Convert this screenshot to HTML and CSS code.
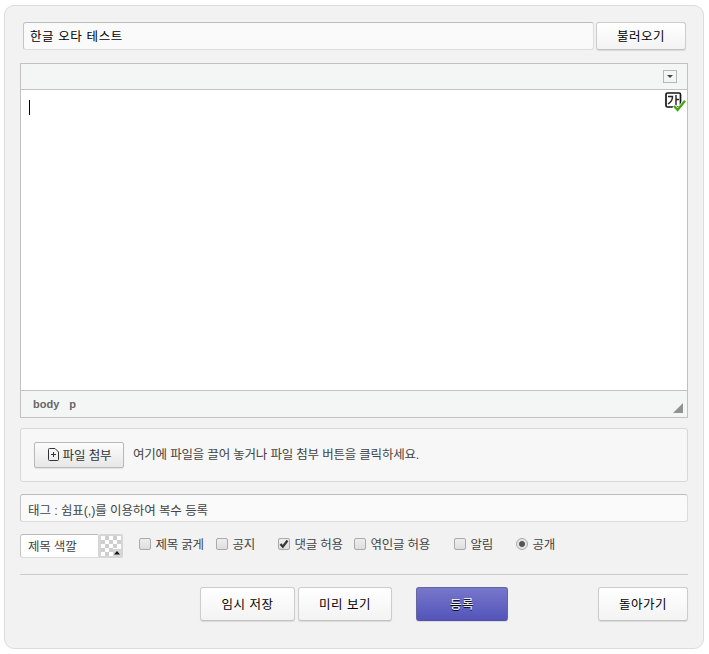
FILE: index.html
```html
<!DOCTYPE html>
<html lang="ko">
<head>
<meta charset="utf-8">
<title>글쓰기</title>
<link rel="stylesheet" href="styles.css">
</head>
<body>
<main class="panel">
  <div class="title-row">
    <div class="title-input">한글 오타 테스트</div>
    <button class="btn load">불러오기</button>
  </div>
  <section class="editor">
    <div class="toolbar">
      <span class="collapse"><svg width="6" height="3" viewBox="0 0 6 3"><path d="M0 0h6L3 3z" fill="#444"/></svg></span>
    </div>
    <div class="content">
      <span class="caret"></span>
      <svg class="speller" width="21" height="21" viewBox="0 0 21 21" fill="none">
        <rect x="1" y="1" width="14.5" height="14" rx="1.5" fill="#fff" stroke="#161616" stroke-width="1.7"/>
        <path d="M3 4.500h4.500c0 3-1.200 5.600-4.500 7.500M11 3v10.500M11 7.500h3" stroke="#222" stroke-width="1.400"/>
        <path d="M9 14l3.700 4.800L19.800 9" stroke="#fff" stroke-width="4"/>
        <path d="M9 14l3.600 4L20 8.800" stroke="#42a60b" stroke-width="2.300"/>
      </svg>
    </div>
    <div class="status"><b>body</b><b>p</b>
      <svg class="grip" width="10" height="10" viewBox="0 0 10 10"><path d="M10 0v10H0z" fill="#929292"/></svg>
    </div>
  </section>
  <section class="upload">
    <button class="attach"><svg width="11" height="13" viewBox="0 0 11 13" fill="none" stroke="#333" stroke-width="1"><path d="M1.500.5h5.500l3.500 3.500v7.500q0 1-1 1h-8q-1 0-1-1v-10q0-1 1-1zM3 6.500h5M5.500 4v5"/></svg><span>파일 첨부</span></button>
    <span class="hint">여기에 파일을 끌어 놓거나 파일 첨부 버튼을 클릭하세요.</span>
  </section>
  <div class="tags">태그 : 쉼표(,)를 이용하여 복수 등록</div>
  <div class="options">
    <div class="color"><span class="color-name">제목 색깔</span><span class="swatch"><svg width="20" height="20" viewBox="0 0 20 20"><path d="M4 0h4v4H4zM12 0h4v4h-4zM0 4h4v4H0zM8 4h4v4H8zM16 4h4v4h-4zM4 8h4v4H4zM12 8h4v4h-4zM0 12h4v4H0zM8 12h4v4H8zM4 16h4v4H4z" fill="#cecece"/><path d="M12 13h8v7h-8z" fill="#d6d6d6"/><path d="M13 18.500h6L16 15z" fill="#111"/></svg></span></div>
    <label class="opt o1"><i class="box"></i><span>제목 굵게</span></label>
    <label class="opt o2"><i class="box"></i><span>공지</span></label>
    <label class="opt o3"><i class="box"><svg width="10" height="10" viewBox="0 0 10 10"><path d="M1.500 5l2.300 2.700L8.500 1.500" fill="none" stroke="#383838" stroke-width="2.300"/></svg></i><span>댓글 허용</span></label>
    <label class="opt o4"><i class="box"></i><span>엮인글 허용</span></label>
    <label class="opt o5"><i class="box"></i><span>알림</span></label>
    <label class="opt o6"><i class="box radio"></i><span>공개</span></label>
  </div>
  <div class="actions">
    <button class="btn save">임시 저장</button>
    <button class="btn preview">미리 보기</button>
    <button class="btn submit">등록</button>
    <button class="btn back">돌아가기</button>
  </div>
</main>
</body>
</html>
```
FILE: styles.css
```css
* { box-sizing: border-box; }
body {
  margin: 0;
  padding: 5px 0 0 4px;
  background: #fff;
  color: #444;
  font: 12.5px/18px "Liberation Sans", "Noto Sans CJK KR", sans-serif;
}
svg { display: block; }
button { font: inherit; padding: 0; margin: 0; }
.panel {
  width: 700px;
  height: 644px;
  padding: 16px 15px 0;
  border: 1px solid #dcdcdc;
  border-radius: 10px;
  background: #f2f2f2;
}
.title-row { display: flex; gap: 2px; margin-left: 3px; }
.title-input, .tags {
  height: 28px;
  border: 1px solid #dcdcdc;
  border-top-color: #bbb;
  border-left-color: #c4c4c4;
  border-radius: 3px;
  background: #fafafa;
  white-space: nowrap;
}
.title-input { width: 571px; padding: 5px 6px 0; color: #000; letter-spacing: .6px; }
.btn {
  padding-top: 1px;
  border: 1px solid #ccc;
  border-bottom-color: #c2c2c2;
  border-radius: 3px;
  background: linear-gradient(#fff, #f3f3f3);
  box-shadow: 0 1px 1px rgba(0, 0, 0, .1);
  color: #000;
  letter-spacing: .5px;
  white-space: nowrap;
}
.load { width: 90px; height: 28px; }
.editor {
  width: 668px;
  height: 355px;
  margin-top: 13px;
  border: 1px solid #c1c1c1;
  background: #fff;
}
.toolbar {
  display: flex;
  justify-content: flex-end;
  height: 26px;
  padding: 6px 10px 0 0;
  border-bottom: 1px solid #c1c1c1;
  background: #f4f6f6;
}
.collapse {
  display: flex;
  align-items: center;
  justify-content: center;
  width: 14px;
  height: 13px;
  border: 1px solid #b8b8b8;
}
.content {
  display: flex;
  justify-content: space-between;
  height: 300px;
  padding: 2px 1px 0 8px;
}
.caret { width: 1px; height: 15px; margin-top: 8px; background: #000; }
.status {
  display: flex;
  gap: 10px;
  height: 27px;
  padding: 4px 4px 0 12px;
  border-top: 1px solid #c1c1c1;
  background: #f4f6f6;
  color: #666;
  font-size: 11px;
}
.grip { margin: 8px 0 0 auto; }
.upload {
  display: flex;
  width: 668px;
  height: 54px;
  margin-top: 10px;
  padding: 13px 13px 0;
  border: 1px solid #d8d8d8;
  border-radius: 3px;
  background: #f7f7f7;
}
.attach {
  display: flex;
  align-items: center;
  justify-content: center;
  gap: 4px;
  width: 90px;
  height: 26px;
  padding-left: 1px;
  border: 1px solid #b9b9b9;
  border-radius: 2px;
  background: linear-gradient(#fcfcfc, #e7e7e7);
  box-shadow: 0 1px 1px rgba(0, 0, 0, .08);
  color: #333;
}
.attach svg { margin-top: -2px; }
.attach span { padding-top: 1px; letter-spacing: -.1px; }
.hint { margin: 4px 0 0 9px; letter-spacing: -.2px; white-space: nowrap; }
.tags { width: 668px; margin-top: 12px; padding: 7px 7px 0; letter-spacing: -.1px; }
.options { display: flex; height: 24px; margin-top: 12px; }
.color { display: flex; width: 103px; }
.color-name {
  width: 78px;
  height: 24px;
  padding: 3px 0 0 7px;
  border: 1px solid #dcdcdc;
  border-top-color: #bbb;
  border-left-color: #c4c4c4;
  border-right: 0;
  border-radius: 3px 0 0 3px;
  background: #fff;
  letter-spacing: -.2px;
  white-space: nowrap;
}
.swatch {
  width: 25px;
  height: 24px;
  border: 2px solid #d6d6d6;
  border-left-width: 3px;
  border-radius: 2px;
  background: #fff;
}
.opt {
  display: flex;
  gap: 4.5px;
  height: 20px;
  padding-top: 1px;
  letter-spacing: -.25px;
  white-space: nowrap;
}
.opt span { padding-top: 1px; }
.o1 { margin-left: 16px; width: 77px; }
.o2 { width: 62px; }
.o3 { width: 76px; }
.o4 { width: 100px; }
.o5 { width: 62px; }
.box {
  flex: none;
  width: 12px;
  height: 12px;
  margin-top: 3px;
  border: 1px solid #aaa;
  border-radius: 2px;
  background: linear-gradient(#eee, #dedede);
}
.radio { border-radius: 50%; background: radial-gradient(circle, #555 2.500px, #e5e5e5 3.500px); }
.actions {
  display: flex;
  height: 47px;
  margin-top: 16px;
  padding: 12px 0 0 180px;
  border-top: 1px solid #ccc;
}
.actions .btn { height: 34px; }
.save { width: 95px; }
.preview { width: 94px; margin-left: 3px; }
.actions .submit {
  width: 92px;
  margin-left: 24px;
  border-color: #65659f;
  border-bottom-color: #5151a9;
  background: linear-gradient(#7777cb, #5454ba);
  color: #fff;
  text-shadow: 0 1px 0 #000;
}
.back { width: 90px; margin-left: 90px; }
```
